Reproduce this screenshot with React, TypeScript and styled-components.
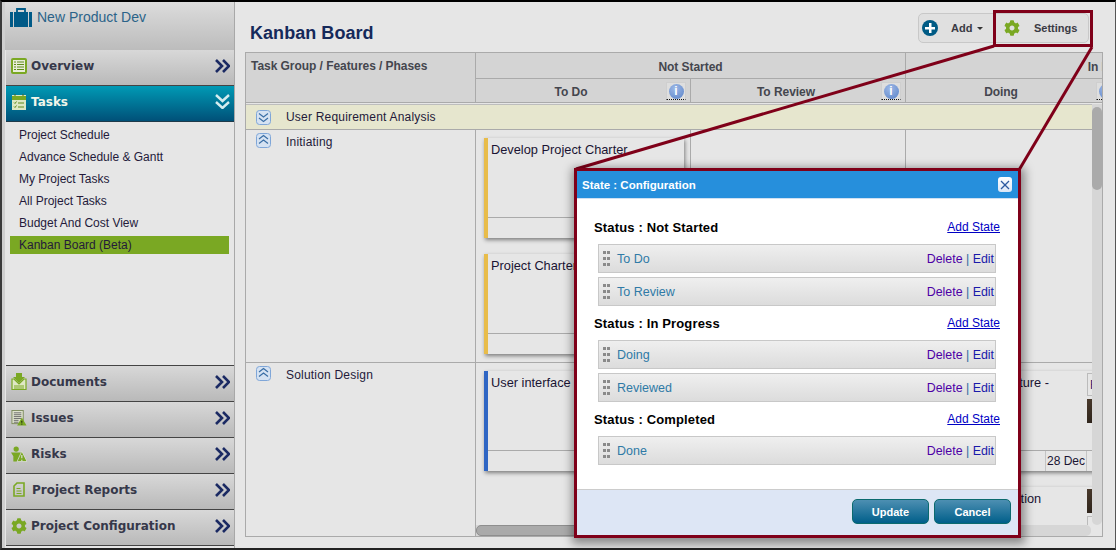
import React from 'react'
import styled, { createGlobalStyle } from 'styled-components'
import { FaCog } from 'react-icons/fa'

const GlobalStyle = createGlobalStyle`
    html, body {
        margin: 0;
        padding: 0;
        background: #e6e6e6;
    }
    * {
        box-sizing: border-box;
    }
`

const GREEN = '#7aa823'
const MAROON = '#7f0019'

function DoubleChevron() {
    return (
        <svg width="15" height="14" viewBox="0 0 15 14" fill="none" stroke="#1b2a63" strokeWidth="2.6">
            <polyline points="1,1 7,7 1,13" />
            <polyline points="8,1 14,7 8,13" />
        </svg>
    )
}

function DoubleChevronDown() {
    return (
        <svg width="15" height="15" viewBox="0 0 15 15" fill="none" stroke="#d5ecef" strokeWidth="2.4">
            <polyline points="1,1 7.5,7 14,1" />
            <polyline points="1,8 7.5,14 14,8" />
        </svg>
    )
}

function OverviewIcon() {
    return (
        <svg width="16" height="16" viewBox="0 0 16 16">
            <rect x="0" y="0" width="16" height="16" rx="2" fill={GREEN} />
            <rect x="2" y="2" width="12" height="12" fill="#e8edd8" />
            <path d="M3 4h2M6 4h7M3 6.5h2M6 6.5h7M3 9h2M6 9h7M3 11.5h2M6 11.5h7" stroke="#5f8a1c" strokeWidth="1" />
        </svg>
    )
}

function TasksIcon() {
    return (
        <svg width="16" height="16" viewBox="0 0 16 16">
            <rect x="1" y="1" width="14" height="15" fill="#dfe8c4" />
            <rect x="1" y="2" width="14" height="4" fill={GREEN} />
            <path d="M4 0v2M12 0v2" stroke="#4d6a18" strokeWidth="1" />
            <path d="M3 8.5l1 1 1.5-2M7 9h6M3 12.5l1 1 1.5-2M7 13h6" stroke="#5f8a1c" strokeWidth="1" fill="none" />
        </svg>
    )
}

function DocumentsIcon() {
    return (
        <svg width="16" height="17" viewBox="0 0 16 17">
            <path d="M5 0h6v4h3l-6 6-6-6h3z" fill={GREEN} />
            <path d="M1 6h2l5 5 5-5h2v10.5H1z" fill="#dfe8c4" stroke={GREEN} strokeWidth="1.2" />
            <path d="M3 13h10M3 15h10" stroke={GREEN} strokeWidth="1" />
        </svg>
    )
}

function IssuesIcon() {
    return (
        <svg width="17" height="16" viewBox="0 0 17 16">
            <rect x="1" y="0" width="12" height="14" fill="#dfe3cf" stroke="#7c8a5c" strokeWidth="1" />
            <path d="M3 2.5h8M3 4.5h8M3 6.5h8M3 8.5h8M3 10.5h5M3 12.5h5" stroke="#6a6a6a" strokeWidth="1" />
            <path d="M11.5 7.5l5 8.5h-10z" fill={GREEN} />
            <path d="M11.5 11v2M11.5 14v1" stroke="#111" strokeWidth="1" />
        </svg>
    )
}

function RisksIcon() {
    return (
        <svg width="17" height="16" viewBox="0 0 17 16">
            <circle cx="5.5" cy="2.8" r="2.8" fill={GREEN} />
            <path d="M0 6.5h11l-1.5 4v5.5h-7v-5.5z" fill={GREEN} />
            <path d="M11.5 5l5.5 11H6.5z" fill={GREEN} stroke="#e0e0e0" strokeWidth="0.8" />
            <path d="M11.5 9v3.5M11.5 14v1.5" stroke="#e0e0e0" strokeWidth="1.2" />
        </svg>
    )
}

function ReportsIcon() {
    return (
        <svg width="12" height="15" viewBox="0 0 12 15" fill="none" stroke={GREEN}>
            <path d="M4 1h7v13H1V4z" strokeWidth="1.6" />
            <path d="M3.5 6.5h4M3.5 9h5M3.5 11.5h5" strokeWidth="1" />
        </svg>
    )
}

function Briefcase() {
    return (
        <svg width="22" height="19" viewBox="0 0 22 19" fill="#005a87">
            <rect x="0" y="4" width="3" height="15" />
            <rect x="4" y="4" width="14" height="15" />
            <rect x="19" y="4" width="3" height="15" />
            <path d="M7 4V1h8v3" fill="none" stroke="#005a87" strokeWidth="1.8" />
        </svg>
    )
}

function GripDots() {
    return (
        <svg width="7" height="15" viewBox="0 0 7 15" fill="#8a8a8a">
            {[0, 6, 12].map(y => (
                <React.Fragment key={y}>
                    <rect x="0" y={y} width="3" height="3" />
                    <rect x="4" y={y} width="3" height="3" />
                </React.Fragment>
            ))}
        </svg>
    )
}

function Toggle({ open }: { open?: boolean }) {
    const points = open ? ['3,6 7.5,2.5 12,6', '3,10.5 7.5,7 12,10.5'] : ['3,3.5 7.5,7 12,3.5', '3,8 7.5,11.5 12,8']
    return (
        <svg width="15" height="15" viewBox="0 0 15 15" fill="none">
            <rect x="0.5" y="0.5" width="14" height="14" rx="3" fill="#d5e2f2" stroke="#7fa6d8" />
            {points.map(p => <polyline key={p} points={p} stroke="#3a6ea5" strokeWidth="1.2" />)}
        </svg>
    )
}

const NAV_TOP = [{ label: 'Overview', icon: <OverviewIcon /> }]
const NAV_BOTTOM = [
    { label: 'Documents', icon: <DocumentsIcon /> },
    { label: 'Issues', icon: <IssuesIcon /> },
    { label: 'Risks', icon: <RisksIcon /> },
    { label: 'Project Reports', icon: <ReportsIcon />, shift: true },
    { label: 'Project Configuration', icon: <FaCog size={16} color={GREEN} /> },
]
const SUB_ITEMS = ['Project Schedule', 'Advance Schedule & Gantt', 'My Project Tasks', 'All Project Tasks', 'Budget And Cost View', 'Kanban Board (Beta)']

const STATES = [
    { title: 'Status : Not Started', items: ['To Do', 'To Review'] },
    { title: 'Status : In Progress', items: ['Doing', 'Reviewed'] },
    { title: 'Status : Completed', items: ['Done'] },
]

export default function App() {
    return (
        <Screen>
            <GlobalStyle />

            <Sidebar>
                <ProjectHeader>
                    <Briefcase />
                    <ProjectName>New Product Dev</ProjectName>
                </ProjectHeader>

                {NAV_TOP.map(item => (
                    <NavHead key={item.label}>
                        <NavIcon>{item.icon}</NavIcon>
                        <NavLabel>{item.label}</NavLabel>
                        <DoubleChevron />
                    </NavHead>
                ))}

                <NavHead $active>
                    <NavIcon><TasksIcon /></NavIcon>
                    <NavLabel>Tasks</NavLabel>
                    <DoubleChevronDown />
                </NavHead>
                <SubMenu>
                    {SUB_ITEMS.map((item, i) => (
                        <SubItem key={item} $active={i === SUB_ITEMS.length - 1}>{item}</SubItem>
                    ))}
                </SubMenu>

                {NAV_BOTTOM.map(item => (
                    <NavHead key={item.label}>
                        <NavIcon $shift={item.shift}>{item.icon}</NavIcon>
                        <NavLabel>{item.label}</NavLabel>
                        <DoubleChevron />
                    </NavHead>
                ))}
            </Sidebar>

            <Main>
                <TitleRow>
                    <Title>Kanban Board</Title>
                    <Toolbar>
                        <AddButton>
                            <AddCircle />
                            <ToolLabel>Add</ToolLabel>
                            <Caret />
                        </AddButton>
                        <SettingsButton>
                            <FaCog size={16} color={GREEN} />
                            <SettingsLabel>Settings</SettingsLabel>
                        </SettingsButton>
                    </Toolbar>
                </TitleRow>

                <Board>
                    <BoardHead>
                        <FrozenHead>Task Group / Features / Phases</FrozenHead>
                        <GroupHead $span={2}>Not Started</GroupHead>
                        <GroupHead $span={2}>In Progress</GroupHead>
                        <ColumnHead>To Do<InfoButton><InfoDot>i</InfoDot></InfoButton></ColumnHead>
                        <ColumnHead>To Review<InfoButton><InfoDot>i</InfoDot></InfoButton></ColumnHead>
                        <ColumnHead>Doing<InfoButton><InfoDot>i</InfoDot></InfoButton></ColumnHead>
                        <ColumnHead>Reviewed<InfoButton><InfoDot>i</InfoDot></InfoButton></ColumnHead>
                    </BoardHead>

                    <BoardMiddle>
                        <BoardPane>
                            <PhaseBand>
                                <ToggleSlot><Toggle /></ToggleSlot>
                                User Requirement Analysis
                            </PhaseBand>

                            <PhaseRow $height={233}>
                                <PhaseCell>
                                    <ToggleSlot><Toggle open /></ToggleSlot>
                                    Initiating
                                </PhaseCell>
                                <CardCell>
                                    <Card $accent="#e8bc4a">
                                        <CardBody><CardText>Develop Project Charter</CardText></CardBody>
                                        <CardFoot />
                                    </Card>
                                    <Card $accent="#e8bc4a">
                                        <CardBody><CardText>Project Charter Review</CardText></CardBody>
                                        <CardFoot />
                                    </Card>
                                </CardCell>
                                <CardCell />
                                <CardCell />
                            </PhaseRow>

                            <PhaseRow $height={162}>
                                <PhaseCell>
                                    <ToggleSlot><Toggle open /></ToggleSlot>
                                    Solution Design
                                </PhaseCell>
                                <CardCell>
                                    <Card $accent="#2f66c4">
                                        <CardBody><CardText>User interface design</CardText></CardBody>
                                        <CardFoot />
                                    </Card>
                                </CardCell>
                                <CardCell />
                                <CardCell>
                                    <Card $accent="#2f66c4">
                                        <CardBody>
                                            <CardText>Systems Architecture -</CardText>
                                            <CardSide>
                                                <OwnerTag>F</OwnerTag>
                                                <Avatar />
                                            </CardSide>
                                        </CardBody>
                                        <CardFoot>
                                            <DueDate>28 Dec</DueDate>
                                        </CardFoot>
                                    </Card>
                                    <Card $accent="#2f66c4">
                                        <CardBody>
                                            <CardText>Code Documentation</CardText>
                                            <CardSide>
                                                <Avatar />
                                                <OwnerTag />
                                            </CardSide>
                                        </CardBody>
                                        <CardFoot />
                                    </Card>
                                </CardCell>
                            </PhaseRow>
                        </BoardPane>
                        <ScrollTrack>
                            <ScrollThumb />
                        </ScrollTrack>
                    </BoardMiddle>

                    <BoardBottom>
                        <FrozenFill />
                        <HScrollTrack>
                            <HScrollThumb />
                        </HScrollTrack>
                    </BoardBottom>
                </Board>
            </Main>

            <Callout width="1116" height="550" viewBox="0 0 1116 550">
                <line x1="994" y1="46" x2="576" y2="169" stroke={MAROON} strokeWidth="3" />
                <line x1="1092" y1="47" x2="1019" y2="170" stroke={MAROON} strokeWidth="3" />
                <rect x="994.5" y="11.5" width="97" height="34" fill="none" stroke={MAROON} strokeWidth="3" />
            </Callout>

            <Modal>
                <ModalHeader>
                    <ModalTitle>State : Configuration</ModalTitle>
                    <CloseButton>
                        <svg width="10" height="10" viewBox="0 0 10 10" stroke="#2c5aa0" strokeWidth="1.2">
                            <line x1="1" y1="1" x2="9" y2="9" />
                            <line x1="9" y1="1" x2="1" y2="9" />
                        </svg>
                    </CloseButton>
                </ModalHeader>

                <ModalBody>
                    {STATES.map(group => (
                        <StateGroup key={group.title}>
                            <GroupTitleRow>
                                <GroupTitle>{group.title}</GroupTitle>
                                <AddStateLink href="#">Add State</AddStateLink>
                            </GroupTitleRow>
                            <StateList>
                                {group.items.map(item => (
                                    <StateRow key={item}>
                                        <GripDots />
                                        <StateName>{item}</StateName>
                                        <StateActions>
                                            <DeleteLink>Delete</DeleteLink> | <EditLink>Edit</EditLink>
                                        </StateActions>
                                    </StateRow>
                                ))}
                            </StateList>
                        </StateGroup>
                    ))}
                </ModalBody>

                <ModalFooter>
                    <ModalButton>Update</ModalButton>
                    <ModalButton>Cancel</ModalButton>
                </ModalFooter>
            </Modal>
        </Screen>
    )
}


const Screen = styled.div`
    position: relative;
    display: flex;
    width: 1116px;
    height: 550px;
    overflow: hidden;
    background: #e6e6e6;
    border-top: 2px solid #000;
    border-left: 2px solid #3a3a3a;
    border-right: 1px solid #555;
    border-bottom: 2px solid #222;
    font-family: "Liberation Sans", Arial, sans-serif;
    font-size: 12px;
`

const Sidebar = styled.aside`
    width: 233px;
    flex-shrink: 0;
    padding-left: 4px;
    border-right: 1px solid #a8a8a8;
    background: linear-gradient(90deg, #cfcfcf 0, #cfcfcf 3px, transparent 3px);
`

const ProjectHeader = styled.div`
    display: flex;
    align-items: flex-start;
    gap: 5px;
    height: 48px;
    margin-left: -1px;
    padding: 6px 0 0 5px;
    background: linear-gradient(#dcdcdc, #bcbcbc);
`

const ProjectName = styled.span`
    margin-top: 1px;
    font-size: 14px;
    line-height: 16px;
    color: #2b6389;
`

const NavHead = styled.div<{ $active?: boolean }>`
    display: flex;
    align-items: center;
    height: 36px;
    padding: 0 4px 4px 5px;
    border-bottom: 1px solid ${p => (p.$active ? '#1e3a4a' : '#444')};
    background: ${p => (p.$active ? 'linear-gradient(#009ab5, #005078)' : 'linear-gradient(#d8d8d8, #b9b9b9)')};
    color: ${p => (p.$active ? '#f2f6ea' : '#36384a')};
`

const NavIcon = styled.span<{ $shift?: boolean }>`
    display: flex;
    justify-content: center;
    width: 16px;
    flex-shrink: 0;
    margin-right: ${p => (p.$shift ? '5px' : '4px')};
`

const NavLabel = styled.span`
    flex: 1;
    font-family: "DejaVu Sans", Verdana, sans-serif;
    font-size: 12px;
    font-weight: 700;
`

const SubMenu = styled.ul`
    height: 244px;
    margin: 0;
    padding: 4px 5px 0 4px;
    list-style: none;
    border-bottom: 1px solid #444;
    background: #e6e6e6;
`

const SubItem = styled.li<{ $active?: boolean }>`
    height: 18px;
    margin-bottom: 4px;
    padding-left: 9px;
    line-height: 18px;
    font-size: 12px;
    color: #241a3a;
    background: ${p => (p.$active ? '#7aa823' : 'transparent')};
`

const Main = styled.main`
    flex: 1;
    min-width: 0;
    padding: 0 12px 0 10px;
`

const TitleRow = styled.div`
    display: flex;
    justify-content: space-between;
    align-items: flex-start;
    height: 50px;
`

const Title = styled.h1`
    margin: 20px 0 0 5px;
    font-size: 18px;
    line-height: 22px;
    font-weight: 700;
    letter-spacing: 0.05px;
    color: #15295a;
`

const Toolbar = styled.div`
    display: flex;
    width: 171px;
    height: 30px;
    margin: 11px 14px 0 0;
    border: 1px solid #c8c8c8;
    border-radius: 5px;
    background: #e0e0e0;
`

const AddButton = styled.div`
    display: flex;
    align-items: center;
    width: 75px;
    padding-left: 3px;
`

const AddCircle = styled.span`
    position: relative;
    width: 16px;
    height: 16px;
    margin-right: 13px;
    border-radius: 50%;
    background:
        linear-gradient(#fff, #fff) center / 10px 2.5px no-repeat,
        linear-gradient(#fff, #fff) center / 2.5px 10px no-repeat,
        #005b85;
`

const ToolLabel = styled.span`
    font-size: 11px;
    font-weight: 700;
    color: #3a3a44;
`

const Caret = styled.span`
    margin-left: 5px;
    border-top: 3px solid #333;
    border-left: 3px solid transparent;
    border-right: 3px solid transparent;
`

const SettingsButton = styled.div`
    display: flex;
    align-items: center;
    flex: 1;
    padding-left: 10px;
`

const SettingsLabel = styled(ToolLabel)`
    margin-left: 14px;
`

const Board = styled.section`
    display: flex;
    flex-direction: column;
    width: 858px;
    height: 485px;
    overflow: hidden;
    border: 1px solid #aaa;
    background: #e6e6e6;
`

const BoardHead = styled.div`
    display: grid;
    flex-shrink: 0;
    grid-template-columns: 230px 215px 215px 215px 215px;
    grid-template-rows: 26px 24px;
    width: 1090px;
    background: #d4d4d4;
    font-weight: 700;
    letter-spacing: -0.05px;
    color: #44464e;
`

const FrozenHead = styled.div`
    grid-row: span 2;
    padding: 6px 0 0 5px;
    border-right: 1px solid #aaa;
    border-bottom: 1px solid #aaa;
`

const GroupHead = styled.div<{ $span: number }>`
    grid-column: span ${p => p.$span};
    padding-top: 7px;
    text-align: center;
    border-right: 1px solid #aaa;
    border-bottom: 1px solid #aaa;
`

const ColumnHead = styled.div`
    position: relative;
    padding: 6px 24px 0 0;
    text-align: center;
    border-right: 1px solid #aaa;
    border-bottom: 1px solid #aaa;
`

const InfoButton = styled.span`
    position: absolute;
    top: 3px;
    right: 4px;
    display: flex;
    align-items: center;
    justify-content: center;
    width: 20px;
    height: 18px;
    border: 1px solid #cfcfcf;
    border-bottom: 1px dotted #111;
    background: #dedede;
`

const InfoDot = styled.span`
    width: 15px;
    height: 15px;
    border-radius: 50%;
    background: radial-gradient(circle at 40% 30%, #9db8e6, #5a83c8);
    font-size: 12px;
    line-height: 15px;
    font-weight: 700;
    color: #fff;
    text-align: center;
`

const BoardMiddle = styled.div`
    display: flex;
    height: 422px;
    flex-shrink: 0;
    padding-top: 1px;
`

const BoardPane = styled.div`
    flex: 1;
    min-width: 0;
    overflow: hidden;
`

const PhaseBand = styled.div`
    display: flex;
    align-items: center;
    height: 26px;
    border-top: 1px solid #bdbdbd;
    border-bottom: 1px solid #aaa;
    background: #e6e6ce;
    font-size: 12px;
    letter-spacing: 0.2px;
    color: #241a3a;
`

const ToggleSlot = styled.span`
    display: flex;
    width: 40px;
    padding-left: 10px;
    flex-shrink: 0;
`

const PhaseRow = styled.div<{ $height: number }>`
    display: grid;
    grid-template-columns: 230px 215px 215px 215px;
    width: 875px;
    height: ${p => p.$height}px;
    border-bottom: 1px solid #aaa;

    &:last-child {
        border-bottom: none;
    }
`

const PhaseCell = styled.div`
    display: flex;
    align-items: flex-start;
    padding-top: 3px;
    border-right: 1px solid #aaa;
    font-size: 12px;
    line-height: 19px;
    letter-spacing: 0.2px;
    color: #241a3a;
`

const CardCell = styled.div`
    display: flex;
    flex-direction: column;
    gap: 16px;
    padding: 8px 0 0 8px;
    border-right: 1px solid #aaa;
`

const Card = styled.article<{ $accent: string }>`
    display: flex;
    flex-direction: column;
    flex-shrink: 0;
    width: 200px;
    height: 100px;
    border-left: 4px solid ${p => p.$accent};
    background: #e6e6e6;
    box-shadow: 1px 2px 4px rgba(0, 0, 0, 0.45);
`

const CardBody = styled.div`
    display: flex;
    flex: 1;
`

const CardText = styled.div`
    flex: 1;
    padding: 4px 0 0 3px;
    font-size: 12.8px;
    line-height: 15px;
    color: #1a1433;
`

const CardSide = styled.div`
    display: flex;
    flex-direction: column;
    gap: 3px;
    width: 27px;
    padding-top: 2px;
    flex-shrink: 0;
`

const OwnerTag = styled.div`
    height: 23px;
    padding: 4px 0 0 2px;
    border: 1px solid #bbb;
    font-size: 12px;
    color: #2a1a6a;
`

const Avatar = styled.div`
    height: 24px;
    background: linear-gradient(135deg, #4a3a2c, #17120e);
`

const CardFoot = styled.div`
    display: flex;
    justify-content: flex-end;
    height: 21px;
    padding-right: 27px;
    border-top: 1px solid #aaa;
`

const DueDate = styled.div`
    width: 42px;
    border-left: 1px solid #c4c4c4;
    border-right: 1px solid #c4c4c4;
    font-size: 12px;
    line-height: 20px;
    text-align: center;
    color: #1a1433;
`

const ScrollTrack = styled.div`
    width: 10px;
    flex-shrink: 0;
    margin-bottom: 0;
    padding-top: 3px;
    border-radius: 0 0 5px 5px;
    background: #d6d6d6;
`

const ScrollThumb = styled.div`
    height: 83px;
    border-radius: 5px;
    background: #aaa;
`

const BoardBottom = styled.div`
    display: flex;
    flex: 1;
`

const FrozenFill = styled.div`
    width: 230px;
    flex-shrink: 0;
    border-right: 1px solid #aaa;
`

const HScrollTrack = styled.div`
    flex: 1;
    margin-right: 11px;
    border-radius: 0 5px 5px 0;
    background: #d6d6d6;
`

const HScrollThumb = styled.div`
    width: 330px;
    height: 100%;
    border: 1px solid #8e8e8e;
    border-radius: 5px;
    background: #aaa;
`

const Callout = styled.svg`
    position: absolute;
    top: -2px;
    left: -2px;
    pointer-events: none;
`

const Modal = styled.section`
    position: absolute;
    top: 166px;
    left: 572px;
    display: flex;
    flex-direction: column;
    width: 447px;
    height: 370px;
    border: 3px solid ${MAROON};
    background: #fff;
    box-shadow: 1px 3px 9px 3px rgba(0, 0, 0, 0.4);
`

const ModalHeader = styled.header`
    display: flex;
    align-items: center;
    justify-content: space-between;
    height: 28px;
    flex-shrink: 0;
    padding: 0 6px 0 5px;
    border-bottom: 1px solid #cfe0f2;
    background: #268fdc;
`

const ModalTitle = styled.h2`
    margin: 0;
    font-size: 11.5px;
    font-weight: 700;
    color: #fff;
`

const CloseButton = styled.span`
    display: flex;
    align-items: center;
    justify-content: center;
    width: 14px;
    height: 15px;
    border-radius: 3px;
    background: linear-gradient(#fff, #dbe6f6);
`

const ModalBody = styled.div`
    flex: 1;
    padding: 20px 22px 0 17px;
`

const StateGroup = styled.div`
    margin-bottom: 9px;
`

const GroupTitleRow = styled.div`
    display: flex;
    align-items: center;
    justify-content: space-between;
    height: 16px;
    margin: 0 -4px 9px 0;
`

const GroupTitle = styled.h3`
    margin: 0;
    font-size: 13px;
    font-weight: 700;
    letter-spacing: 0.15px;
    color: #000;
`

const AddStateLink = styled.a`
    font-size: 12px;
    color: #0000c4;
    text-decoration: underline;
`

const StateList = styled.div`
    display: flex;
    flex-direction: column;
    gap: 4px;
    margin-left: 4px;
`

const StateRow = styled.div`
    display: flex;
    align-items: center;
    gap: 7px;
    height: 29px;
    padding: 0 1px 0 4px;
    border: 1px solid #c8c8c8;
    background: linear-gradient(#efefef, #dcdcdc);

    & > svg {
        margin-top: -1px;
    }
`

const StateName = styled.span`
    flex: 1;
    font-size: 12.5px;
    color: #2f7aa6;
`

const StateActions = styled.span`
    font-size: 12.4px;
    color: #2f6aa0;
`

const DeleteLink = styled.a`
    color: #4d00a6;
`

const EditLink = styled.a`
    color: #1a1aaa;
`

const ModalFooter = styled.footer`
    display: flex;
    justify-content: flex-end;
    gap: 5px;
    height: 46px;
    flex-shrink: 0;
    padding: 9px 7px 0 0;
    border-top: 1px solid #ccc;
    background: #dde6f5;
`

const ModalButton = styled.button`
    width: 77px;
    height: 25px;
    padding: 0;
    border: 1px solid #0b6a6e;
    border-radius: 5px;
    background: linear-gradient(#4d8fb2, #005f8a);
    font-family: inherit;
    font-size: 11px;
    font-weight: 700;
    color: #fff;
`
